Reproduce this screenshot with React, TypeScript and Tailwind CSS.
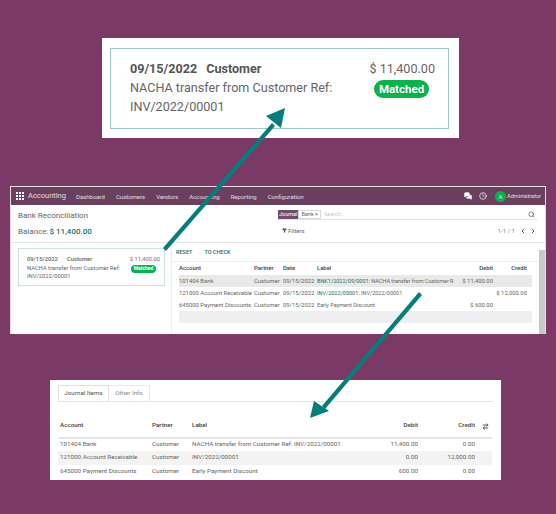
import { Search, ChevronLeft, ChevronRight, Filter, MessagesSquare, Clock, ArrowRightLeft } from "lucide-react";

const font = { fontFamily: "Roboto, sans-serif" };

const midRows = [
  { account: "101404 Bank", partner: "Customer", link: "BNK1/2022/09/0001:", label: " NACHA transfer from Customer R", debit: "$ 11,400.00", credit: "", bg: "bg-[#e9e9e9]" },
  { account: "121000 Account Receivable", partner: "Customer", link: "INV/2022/00001:", label: " INV/2022/00001", debit: "", credit: "$ 12,000.00", bg: "bg-white" },
  { account: "645000 Payment Discounts", partner: "Customer", link: "", label: "Early Payment Discount", debit: "$ 600.00", credit: "", bg: "bg-white" },
];

const botRows = [
  { a: "101404 Bank", l: "NACHA transfer from Customer Ref: INV/2022/00001", d: "11,400.00", c: "0.00", bg: "bg-white border-t-2 border-[#e6e6e6]" },
  { a: "121000 Account Receivable", l: "INV/2022/00001", d: "0.00", c: "12,000.00", bg: "bg-[#f3f3f3]" },
  { a: "645000 Payment Discounts", l: "Early Payment Discount", d: "600.00", c: "0.00", bg: "bg-white" },
];

function AppsIcon() {
  return (
    <svg width="8" height="8" viewBox="0 0 8 8" fill="white">
      {[0, 3, 6].map((y) => [0, 3, 6].map((x) => <rect key={`${x}-${y}`} x={x} y={y} width="2" height="2" />))}
    </svg>
  );
}

export default function App() {
  return (
    <div style={font} className="relative w-[556px] h-[514px] overflow-hidden bg-[#7b3a65] flex flex-col items-start">
      {/* top zoom card */}
      <div className="ml-[102px] mt-[38px] w-[357px] h-[100px] bg-white pl-[8px] pt-[10px]">
        <div className="w-[339px] h-[81px] border border-[#9cc7c7] pl-[19px] pr-[13px] pt-[10px] flex justify-between text-[#666] text-[12.6px] leading-[19px]">
          <div>
            <div className="font-bold text-[#555] flex gap-[9px]"><span>09/15/2022</span><span>Customer</span></div>
            <div className="w-[230px]">NACHA transfer from Customer Ref: INV/2022/00001</div>
          </div>
          <div className="flex flex-col items-end">
            <div className="text-[12.6px] whitespace-nowrap">$ 11,400.00</div>
            <div className="mt-[2px] mr-[6px] w-[55px] h-[18px] rounded-full bg-[#0bb04f] text-white text-[11.5px] font-bold flex items-center justify-center">Matched</div>
          </div>
        </div>
      </div>

      {/* app window */}
      <div className="ml-[10px] mt-[48px] w-[536px] h-[148px] bg-white border-t border-l border-r border-[#e6dbe3] flex flex-col text-[#666]">
        <div className="h-[18px] bg-[#6b3f5e] flex items-center text-white/80 text-[6px] pl-[5px] pr-[4px] shrink-0">
          <AppsIcon />
          <span className="ml-[4px] text-[7.5px] mr-[10px]">Accounting</span>
          <span className="mr-[11px]">Dashboard</span>
          <span className="mr-[11px]">Customers</span>
          <span className="mr-[11px]">Vendors</span>
          <span className="mr-[11px]">Accounting</span>
          <span className="mr-[11px]">Reporting</span>
          <span>Configuration</span>
          <div className="ml-auto flex items-center">
            <MessagesSquare size={8} fill="white" className="text-white mr-[7px]" />
            <Clock size={8} className="text-white mr-[8px]" />
            <span className="w-[11px] h-[11px] rounded-full bg-[#0bb04f] text-[6px] flex items-center justify-center mr-[1px]">A</span>
            <span className="text-[5.6px]">Administrator</span>
          </div>
        </div>
        <div className="h-[38px] border-b border-[#e4e4e4] px-[7px] flex shrink-0">
          <div className="w-[260px] pt-[5px]">
            <div className="text-[8px] leading-[12px]">Bank Reconciliation</div>
            <div className="text-[8px] leading-[12px] mt-[4px] flex gap-[1px]">Balance:<span className="text-[#16706f] font-medium">$ 11,400.00</span></div>
          </div>
          <div className="flex-1 pt-[5px]">
            <div className="h-[10px] border-b border-[#e4e4e4] flex items-center text-[5.5px] pr-[3px]">
              <span className="bg-[#714b67] text-white px-[1px] h-[9px] flex items-center">Journal</span>
              <span className="border border-[#d8d8d8] px-[2px] h-[9px] flex items-center">Bank ×</span>
              <span className="ml-[3px] text-[#c8c8c8]">Search...</span>
              <Search size={7} strokeWidth={2.5} className="ml-auto text-[#555]" />
            </div>
            <div className="flex items-center justify-between mt-[6px] pl-[4px] pr-[1px] text-[6px]">
              <span className="flex items-center gap-[1px]"><Filter size={5} fill="#555" className="text-[#555]" />Filters</span>
              <span className="flex items-center text-[#888]">1-1 / 1
                <ChevronLeft size={8} strokeWidth={3} className="text-[#16706f] ml-[4px]" />
                <ChevronRight size={8} strokeWidth={3} className="text-[#16706f] ml-[2px]" />
              </span>
            </div>
          </div>
        </div>
        <div className="flex flex-1 min-h-0">
          <div className="w-[161px] border-r border-[#eeeeee] pl-[7px] pt-[5px] shrink-0">
            <div className="w-[147px] h-[38px] border border-[#cfe0e0] pl-[8px] pr-[4px] pt-[6px] flex justify-between text-[5.8px] leading-[8.5px]">
              <div>
                <div className="font-medium flex gap-[9px]"><span>09/15/2022</span><span>Customer</span></div>
                <div className="w-[100px]">NACHA transfer from Customer Ref: INV/2022/00001</div>
              </div>
              <div className="flex flex-col items-end">
                <div className="text-[#8a6a6a] whitespace-nowrap">$ 11,400.00</div>
                <div className="mr-[4px] mt-[1px] w-[25px] h-[8px] rounded-full bg-[#0bb04f] text-white font-bold flex items-center justify-center text-[5px]">Matched</div>
              </div>
            </div>
          </div>
          <div className="flex-1 flex min-w-0">
            <div className="flex-1 min-w-0">
              <div className="h-[19px] border-b border-[#eeeeee] flex items-center pl-[4px] gap-[12px] text-[5.5px] font-medium text-[#16706f]">
                <span>RESET</span><span>TO CHECK</span>
              </div>
              <div className="pl-[7px] pr-[7px]">
                <div className="grid grid-cols-[75px_29px_34px_1fr_32px_39px] h-[13px] items-center text-[5.9px] font-medium text-[#444] whitespace-nowrap">
                  <span>Account</span><span>Partner</span><span>Date</span><span>Label</span><span className="text-right">Debit</span><span className="text-right pr-[5px]">Credit</span>
                </div>
                {midRows.map((r) => (
                  <div key={r.account} className={`grid grid-cols-[75px_29px_34px_1fr_32px_39px] h-[12px] items-center text-[5.9px] whitespace-nowrap ${r.bg}`}>
                    <span>{r.account}</span><span>{r.partner}</span><span>09/15/2022</span>
                    <span className="text-[5.5px]"><span className="text-[#16706f]">{r.link}</span>{r.label}</span>
                    <span className="text-right">{r.debit}</span><span className="text-right pr-[5px]">{r.credit}</span>
                  </div>
                ))}
                <div className="h-[12px] bg-[#efefef]" />
              </div>
            </div>
            <div className="w-[6px] mt-[7px] bg-[#c9c9c9] shrink-0" />
          </div>
        </div>
      </div>

      {/* bottom zoom card */}
      <div className="ml-[50px] mt-[46px] w-[451px] h-[100px] bg-white pl-[8px] pt-[6px] flex flex-col text-[#666] text-[6.25px]">
        <div className="h-[16px] border-b border-[#e6e6e6] flex items-end mr-[8px] shrink-0">
          <span className="w-[51px] h-[16px] border border-b-0 border-[#e0e0e0] bg-white flex items-center justify-center text-[#555]">Journal Items</span>
          <span className="w-[41px] h-[16px] border-r border-t border-[#e9e9e9] flex items-center justify-center text-[#888]">Other Info</span>
        </div>
        <div className="grid grid-cols-[92px_40px_1fr_60px_57px_17px] items-end h-[35px] pb-[7px] pl-[2px] mr-[9px] font-medium text-[#444] shrink-0">
          <span>Account</span><span>Partner</span><span>Label</span>
          <span className="text-right">Debit</span><span className="text-right">Credit</span>
          <ArrowRightLeft size={7} strokeWidth={3} className="ml-[7px]" />
        </div>
        {botRows.map((r) => (
          <div key={r.a} className={`grid grid-cols-[92px_40px_1fr_60px_57px_17px] items-center h-[14px] pl-[2px] mr-[9px] ${r.bg}`}>
            <span>{r.a}</span><span>Customer</span><span>{r.l}</span>
            <span className="text-right">{r.d}</span><span className="text-right">{r.c}</span><span />
          </div>
        ))}
      </div>

      {/* arrows over the content */}
      <svg className="absolute inset-0" width="556" height="514" viewBox="0 0 556 514">
        <g fill="#057d7b" stroke="none">
          <path d="M163 248 L272 123 L275 126 L166 251 Z" />
          <path d="M285 108 L281 128 L266 116 Z" />
          <path d="M419 292 L322 406 L325 409 L422 295 Z" />
          <path d="M310 418 L314 401 L329 411 Z" />
        </g>
      </svg>
    </div>
  );
}
